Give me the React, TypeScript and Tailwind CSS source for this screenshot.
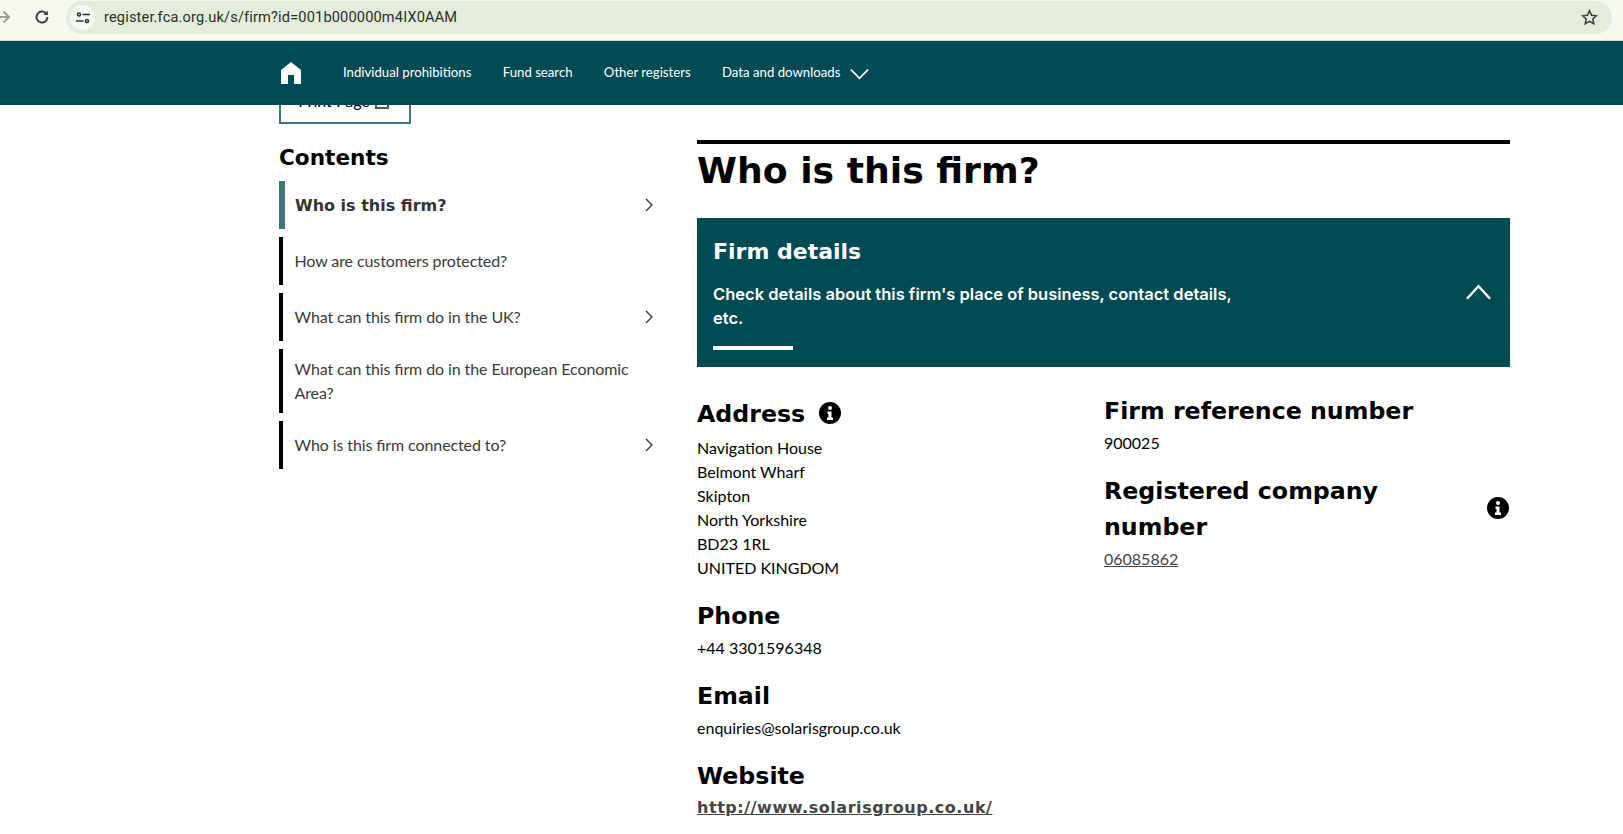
import React from 'react';

const heading = "font-['DejaVu_Sans'] font-bold text-black";

function InfoIcon({ className }: { className?: string }) {
  return (
    <svg viewBox="0 0 22 22" className={className}>
      <circle cx="11" cy="11" r="11" fill="#000" />
      <circle cx="11" cy="6" r="2" fill="#fff" />
      <path d="M8.5 9.5h4v6h1.5v2.5H8v-2.5h1.5v-3.500h-1z" fill="#fff" />
    </svg>
  );
}

function Chevron({ className }: { className?: string }) {
  return (
    <svg viewBox="0 0 8 14" fill="none" stroke="#333" strokeWidth="1.3" className={className}>
      <path d="M1 1l6 6-6 6" />
    </svg>
  );
}

function BrowserBar() {
  return (
    <div className="h-[41px] bg-[#f6f9f0] border-b border-[#d8dccf] flex items-start shrink-0">
      <svg viewBox="0 0 12 14" fill="none" stroke="#9aa096" strokeWidth="2" className="w-[12px] h-[14px] mt-[10px] -ml-[2px]">
        <path d="M0 7h11M5.500 1.500L11 7l-5.500 5.500" />
      </svg>
      <svg viewBox="0 0 16 16" fill="none" stroke="#3c4540" strokeWidth="2" className="w-[16px] h-[16px] ml-[24px] mt-[9px]">
        <path d="M13.500 8a5.500 5.500 0 1 1-1.600-3.900L13.500 5.700" />
        <path d="M13.800 1.500v4.500H9.300" fill="#3c4540" stroke="none" />
      </svg>
      <div className="ml-[16px] mt-[1px] w-[1546px] h-[33px] rounded-full bg-[#e4ecdb] flex items-center pl-[4px]">
        <div className="w-[25px] h-[25px] rounded-full bg-[#f6f9f0] flex items-center justify-center">
          <svg viewBox="0 0 14 12" fill="none" stroke="#2e3430" strokeWidth="1.500" className="w-[14px] h-[12px]">
            <circle cx="3" cy="2.500" r="1.500" />
            <path d="M6.500 2.500H14M0 9h7.500" />
            <circle cx="11" cy="9" r="1.500" />
          </svg>
        </div>
        <span className="ml-[9px] font-['Roboto'] text-[14.6px] tracking-[0.15px] text-[#2a302c]">register.fca.org.uk/s/firm?id=001b000000m4IX0AAM</span>
        <svg viewBox="0 0 24 24" fill="none" stroke="#3c4540" strokeWidth="2.200" className="w-[17px] h-[17px] ml-auto mr-[14px]">
          <path d="M12 2.500l2.900 6.200 6.800.8-5 4.600 1.300 6.700L12 17.500l-6 3.300 1.300-6.700-5-4.600 6.800-.8z" />
        </svg>
      </div>
    </div>
  );
}

function NavBar() {
  const items = ['Individual prohibitions', 'Fund search', 'Other registers', 'Data and downloads'];
  return (
    <nav className="relative z-10 h-[64px] bg-[#004a54] flex items-center pl-[280px] shrink-0 font-['Lato'] text-[13.2px] text-white">
      <svg viewBox="0 0 22 22" fill="#fff" className="w-[22px] h-[22px]">
        <path d="M11 0L21 8v14h-7v-9H8v9H1V8z" />
      </svg>
      <div className="flex gap-[31.300px] ml-[41px] -mt-[1px]">
        {items.map((item) => (
          <a key={item}>{item}</a>
        ))}
      </div>
      <svg viewBox="0 0 20 12" fill="none" stroke="#fff" strokeWidth="1.800" className="w-[19px] h-[12px] ml-[10px] mt-[2px]">
        <path d="M1 1.500l9 9 9-9" />
      </svg>
    </nav>
  );
}

function Sidebar() {
  const links = [
    { label: 'How are customers protected?', h: 'h-[48px]', arrow: false },
    { label: 'What can this firm do in the UK?', h: 'h-[48px]', arrow: true },
    { label: 'What can this firm do in the European Economic Area?', h: 'h-[64px]', arrow: false },
    { label: 'Who is this firm connected to?', h: 'h-[48px]', arrow: true },
  ];
  return (
    <aside className="w-[376px] shrink-0 -mt-[29px]">
      <div className="w-[132px] h-[48px] border-2 border-[#41757d] flex items-center justify-center gap-[5px] pr-[3px] pt-[1px] font-['Lato'] text-[16px] text-black">
        Print Page
        <span className="w-[14px] h-[12px] mt-[4px] border-2 border-[#555]" />
      </div>
      <h3 className={`${heading} text-[21.6px] leading-[28px] mt-[20px]`}>Contents</h3>
      <div className="mt-[9px] border-l-[6px] border-[#41757d] h-[48px] flex items-center justify-between pl-[10px] pr-[2px]">
        <span className="font-['DejaVu_Sans'] font-bold text-[16px] text-[#333] pt-[1px]">Who is this firm?</span>
        <Chevron className="w-[8px] h-[14px]" />
      </div>
      <div className="flex flex-col gap-[8px] mt-[8px]">
        {links.map((l) => (
          <div key={l.label} className={`${l.h} border-l-[4px] border-black flex items-center justify-between pl-[11.500px] pr-[2px]`}>
            <span className="font-['Lato'] text-[16px] leading-[24px] tracking-[-0.1px] [font-feature-settings:'liga'_1] text-[#3a3a3a] w-[340px]">{l.label}</span>
            {l.arrow && <Chevron className="w-[8px] h-[14px]" />}
          </div>
        ))}
      </div>
    </aside>
  );
}

function Field({ title, children, size = 'mt-[20px]' }: { title: string; children: React.ReactNode; size?: string }) {
  return (
    <div className={size}>
      <h4 className={`${heading} text-[23.7px] leading-[36px]`}>{title}</h4>
      {children}
    </div>
  );
}

function FirmDetails() {
  return (
    <main className="w-[813px] mt-[35px]">
      <div className="h-[4px] bg-black" />
      <h1 className={`${heading} text-[36.2px] leading-[52px] pt-[1px] -mb-[1px]`}>Who is this firm?</h1>
      <section className="mt-[22px] h-[149px] bg-[#004a54] pl-[16px] pr-[18px] pt-[17px] text-white relative">
        <h2 className="font-['DejaVu_Sans'] font-bold text-[22px] leading-[33px]">Firm details</h2>
        <p className="mt-[14px] w-[540px] font-['Inter'] font-semibold text-[16.5px] leading-[24px]">
          Check details about this firm's place of business, contact details, etc.
        </p>
        <div className="mt-[16px] w-[80px] h-[4px] bg-white" />
        <svg viewBox="0 0 26 16" fill="none" stroke="#fff" strokeWidth="2.500" className="absolute right-[19px] top-[66px] w-[25px] h-[16px]">
          <path d="M1 15L13 2l12 13" />
        </svg>
      </section>
      <div className="grid grid-cols-[407px_406px] mt-[28px] text-[16px] leading-[24px] font-['Lato'] text-black">
        <div>
          <div className="flex items-center gap-[14px]">
            <h4 className={`${heading} text-[23.7px] leading-[36px] pt-[1px] -mb-[1px]`}>Address</h4>
            <InfoIcon className="w-[22px] h-[22px]" />
          </div>
          <div className="mt-[5px]">
            <div>Navigation House</div>
            <div>Belmont Wharf</div>
            <div>Skipton</div>
            <div>North Yorkshire</div>
            <div>BD23 1RL</div>
            <div>UNITED KINGDOM</div>
          </div>
          <Field title="Phone" size="mt-[18px]">
            <div className="mt-[2px]">+44 3301596348</div>
          </Field>
          <Field title="Email" size="mt-[18px]">
            <div className="mt-[2px]">enquiries@solarisgroup.co.uk</div>
          </Field>
          <Field title="Website" size="mt-[18px]">
            <a className="block mt-[2px] font-['DejaVu_Sans'] font-bold text-[#444] underline tracking-[0.55px]">http://www.solarisgroup.co.uk/</a>
          </Field>
        </div>
        <div className="-mt-[2px]">
          <h4 className={`${heading} text-[23.7px] leading-[36px]`}>Firm reference number</h4>
          <div className="mt-[2px]">900025</div>
          <div className="flex items-center justify-between mt-[18px]">
            <h4 className={`${heading} text-[23.7px] leading-[36px] w-[320px]`}>Registered company number</h4>
            <InfoIcon className="w-[22px] h-[22px] mr-[1px] -mt-[2px]" />
          </div>
          <a className="block mt-[2px] underline text-[#444]">06085862</a>
        </div>
      </div>
    </main>
  );
}

export default function App() {
  return (
    <div className="h-[834px] overflow-hidden bg-white flex flex-col">
      <BrowserBar />
      <NavBar />
      <div className="flex pl-[279px] items-start">
        <Sidebar />
        <div className="ml-[42px]">
          <FirmDetails />
        </div>
      </div>
    </div>
  );
}
